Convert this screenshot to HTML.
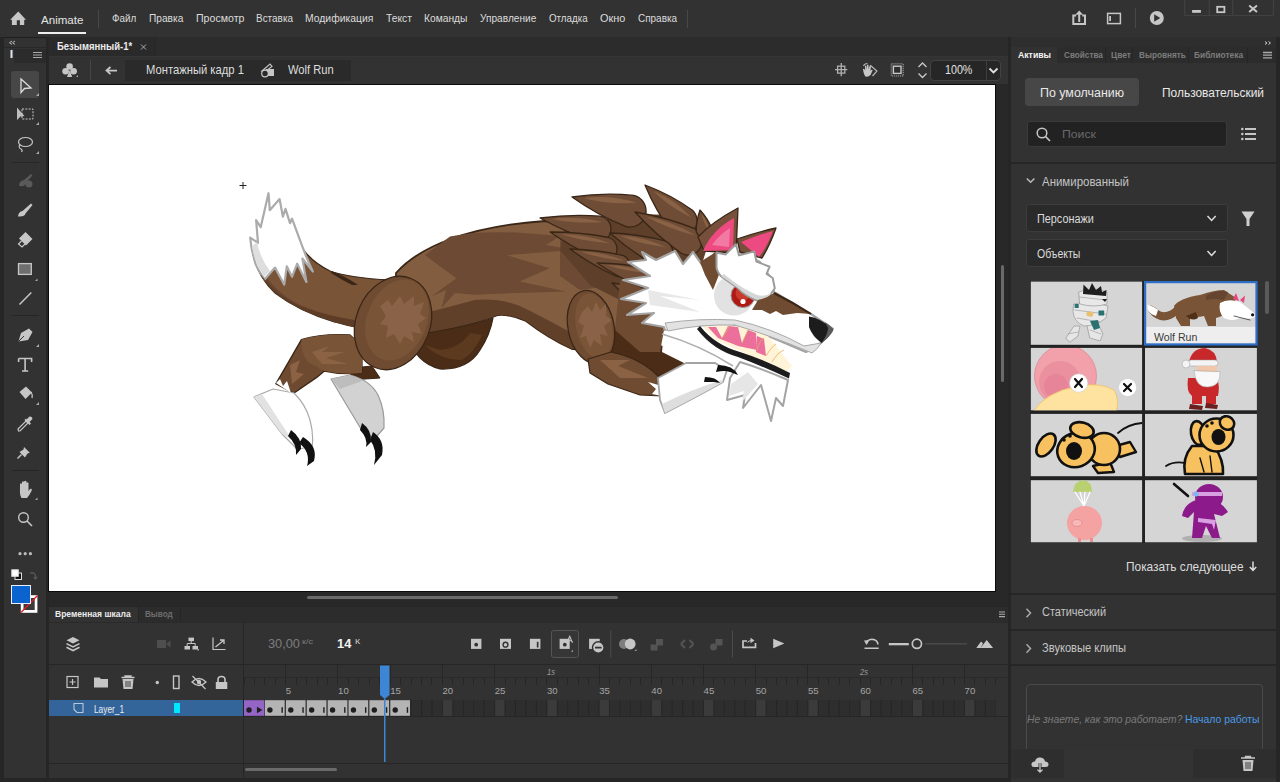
<!DOCTYPE html>
<html><head><meta charset="utf-8">
<style>
*{margin:0;padding:0;box-sizing:border-box}
html,body{width:1280px;height:782px;overflow:hidden;background:#1e1e1e;font-family:"Liberation Sans",sans-serif}
.a{position:absolute}
.t{position:absolute;white-space:nowrap;line-height:1}
svg.s{position:absolute;left:0;top:0;overflow:visible}
</style></head><body>
<div class="a" style="left:0px;top:0px;width:1280px;height:37px;background:#323232;"></div>
<div class="t" style="left:41.00px;top:15.00px;font-size:11.8px;color:#e4e4e4;transform:scaleX(0.9792);transform-origin:0 0;">Animate</div>
<div class="a" style="left:38px;top:32px;width:48px;height:2px;background:#efefef;"></div>
<div class="a" style="left:98px;top:10px;width:1px;height:18px;background:#484848;"></div>
<div class="t" style="left:112.10px;top:13.00px;font-size:11px;color:#dcdcdc;transform:scaleX(0.8946);transform-origin:0 0;">Файл</div>
<div class="t" style="left:148.80px;top:13.00px;font-size:11px;color:#dcdcdc;transform:scaleX(0.9247);transform-origin:0 0;">Правка</div>
<div class="t" style="left:195.60px;top:13.00px;font-size:11px;color:#dcdcdc;transform:scaleX(0.9632);transform-origin:0 0;">Просмотр</div>
<div class="t" style="left:256.00px;top:13.00px;font-size:11px;color:#dcdcdc;transform:scaleX(0.9046);transform-origin:0 0;">Вставка</div>
<div class="t" style="left:305.00px;top:13.00px;font-size:11px;color:#dcdcdc;transform:scaleX(0.9434);transform-origin:0 0;">Модификация</div>
<div class="t" style="left:385.50px;top:13.00px;font-size:11px;color:#dcdcdc;transform:scaleX(0.9386);transform-origin:0 0;">Текст</div>
<div class="t" style="left:424.40px;top:13.00px;font-size:11px;color:#dcdcdc;transform:scaleX(0.9313);transform-origin:0 0;">Команды</div>
<div class="t" style="left:479.70px;top:13.00px;font-size:11px;color:#dcdcdc;transform:scaleX(0.9207);transform-origin:0 0;">Управление</div>
<div class="t" style="left:549.40px;top:13.00px;font-size:11px;color:#dcdcdc;transform:scaleX(0.8874);transform-origin:0 0;">Отладка</div>
<div class="t" style="left:600.30px;top:13.00px;font-size:11px;color:#dcdcdc;transform:scaleX(0.9902);transform-origin:0 0;">Окно</div>
<div class="t" style="left:637.80px;top:13.00px;font-size:11px;color:#dcdcdc;transform:scaleX(0.9051);transform-origin:0 0;">Справка</div>
<div class="a" style="left:687px;top:10px;width:1px;height:18px;background:#484848;"></div>
<div class="a" style="left:1135px;top:8px;width:1px;height:20px;background:#484848;"></div>
<div class="a" style="left:0px;top:37px;width:4px;height:745px;background:#262626;"></div>
<div class="a" style="left:4px;top:38px;width:42px;height:744px;background:#323232;"></div>
<div class="a" style="left:46px;top:37px;width:3px;height:745px;background:#262626;"></div>
<div class="a" style="left:4px;top:47px;width:42px;height:1px;background:#282828;"></div>
<div class="a" style="left:13.5px;top:48.5px;width:32.5px;height:14px;background:#2b2b2b;"></div>
<div class="a" style="left:11px;top:71px;width:28px;height:27px;background:#474747;border-radius:3px"></div>
<div class="a" style="left:12px;top:162px;width:27px;height:1px;background:#262626;"></div>
<div class="a" style="left:12px;top:315px;width:27px;height:1px;background:#262626;"></div>
<div class="a" style="left:12px;top:470px;width:27px;height:1px;background:#262626;"></div>
<div class="a" style="left:49px;top:37px;width:959px;height:20px;background:#2c2c2c;"></div>
<div class="a" style="left:49px;top:37px;width:107px;height:19px;background:#2a2a2a;"></div>
<div class="a" style="left:155px;top:37px;width:1px;height:19px;background:#262626;"></div>
<div class="t" style="left:56.60px;top:41.00px;font-size:10.6px;color:#ececec;font-weight:bold;transform:scaleX(0.8974);transform-origin:0 0;">Безымянный-1*</div>
<div class="a" style="left:49px;top:56px;width:959px;height:1px;background:#353535;"></div>
<div class="a" style="left:49px;top:57px;width:959px;height:27px;background:#323232;"></div>
<div class="a" style="left:90px;top:60px;width:1px;height:20px;background:#464646;"></div>
<div class="a" style="left:125px;top:60px;width:226px;height:21px;background:#2a2a2a;"></div>
<div class="t" style="left:146.00px;top:65.00px;font-size:11.9px;color:#dedede;transform:scaleX(0.9441);transform-origin:0 0;">Монтажный кадр 1</div>
<div class="t" style="left:288.20px;top:65.00px;font-size:11.9px;color:#dedede;transform:scaleX(0.9384);transform-origin:0 0;">Wolf Run</div>
<div class="a" style="left:930px;top:60px;width:71px;height:21px;background:#262626;border:1px solid #424242;border-radius:4px"></div>
<div class="a" style="left:986px;top:61px;width:1px;height:19px;background:#3e3e3e;"></div>
<div class="t" style="left:944.60px;top:65.00px;font-size:11.9px;color:#e2e2e2;transform:scaleX(0.8998);transform-origin:0 0;">100%</div>
<div class="a" style="left:49px;top:84px;width:959px;height:522px;background:#282828;"></div>
<div class="a" style="left:48px;top:84px;width:948px;height:508px;background:#0a0a0a;"></div>
<div class="a" style="left:49px;top:85px;width:946px;height:506px;background:#ffffff;"></div>
<div class="a" style="left:307px;top:596px;width:311px;height:3px;background:#6a6a6a;border-radius:2px"></div>
<div class="a" style="left:1000.5px;top:265px;width:3px;height:117px;background:#6a6a6a;border-radius:2px"></div>
<div class="a" style="left:1008px;top:37px;width:3px;height:745px;background:#262626;"></div>
<div class="a" style="left:49px;top:606px;width:959px;height:172px;background:#323232;"></div>
<div class="a" style="left:49px;top:606px;width:959px;height:1px;background:#262626;"></div>
<div class="a" style="left:49px;top:607px;width:959px;height:15px;background:#2c2c2c;"></div>
<div class="a" style="left:49px;top:607px;width:89px;height:15px;background:#323232;"></div>
<div class="a" style="left:138px;top:607px;width:1px;height:15px;background:#262626;"></div>
<div class="a" style="left:180px;top:607px;width:1px;height:15px;background:#262626;"></div>
<div class="t" style="left:54.90px;top:610.00px;font-size:8.7px;color:#ececec;font-weight:bold;transform:scaleX(0.9806);transform-origin:0 0;">Временная шкала</div>
<div class="t" style="left:144.60px;top:610.00px;font-size:8.7px;color:#6e6e6e;font-weight:bold;transform:scaleX(0.9342);transform-origin:0 0;">Вывод</div>
<div class="a" style="left:49px;top:622px;width:959px;height:1px;background:#2a2a2a;"></div>
<div class="a" style="left:243px;top:622px;width:1px;height:156px;background:#262626;"></div>
<div class="a" style="left:49px;top:664px;width:959px;height:1px;background:#262626;"></div>
<div class="t" style="left:267.80px;top:638.00px;font-size:12.6px;color:#7d7d7d;transform:scaleX(1.0143);transform-origin:0 0;">30,00</div>
<div class="t" style="left:301.70px;top:638.00px;font-size:7.5px;color:#7d7d7d;transform:scaleX(1.2088);transform-origin:0 0;">к/с</div>
<div class="t" style="left:336.90px;top:638.00px;font-size:12.6px;color:#f2f2f2;font-weight:bold;transform:scaleX(1.0214);transform-origin:0 0;">14</div>
<div class="t" style="left:354.80px;top:638.00px;font-size:7.5px;color:#cfcfcf;transform:scaleX(1.1954);transform-origin:0 0;">К</div>
<div class="a" style="left:244px;top:677px;width:764px;height:1px;background:#2a2a2a;"></div>
<svg class="s" width="1280" height="782"><rect x="244" y="678" width="1" height="7" fill="#262626"/><rect x="254" y="678" width="1" height="7" fill="#262626"/><rect x="264" y="678" width="1" height="7" fill="#262626"/><rect x="275" y="678" width="1" height="7" fill="#262626"/><rect x="285" y="678" width="1" height="7" fill="#262626"/><rect x="285" y="665" width="1" height="12" fill="#262626"/><rect x="296" y="678" width="1" height="7" fill="#262626"/><rect x="306" y="678" width="1" height="7" fill="#262626"/><rect x="317" y="678" width="1" height="7" fill="#262626"/><rect x="327" y="678" width="1" height="7" fill="#262626"/><rect x="337" y="678" width="1" height="7" fill="#262626"/><rect x="337" y="665" width="1" height="12" fill="#262626"/><rect x="348" y="678" width="1" height="7" fill="#262626"/><rect x="358" y="678" width="1" height="7" fill="#262626"/><rect x="369" y="678" width="1" height="7" fill="#262626"/><rect x="379" y="678" width="1" height="7" fill="#262626"/><rect x="390" y="678" width="1" height="7" fill="#262626"/><rect x="390" y="665" width="1" height="12" fill="#262626"/><rect x="400" y="678" width="1" height="7" fill="#262626"/><rect x="411" y="678" width="1" height="7" fill="#262626"/><rect x="421" y="678" width="1" height="7" fill="#262626"/><rect x="431" y="678" width="1" height="7" fill="#262626"/><rect x="442" y="678" width="1" height="7" fill="#262626"/><rect x="442" y="665" width="1" height="12" fill="#262626"/><rect x="452" y="678" width="1" height="7" fill="#262626"/><rect x="463" y="678" width="1" height="7" fill="#262626"/><rect x="473" y="678" width="1" height="7" fill="#262626"/><rect x="484" y="678" width="1" height="7" fill="#262626"/><rect x="494" y="678" width="1" height="7" fill="#262626"/><rect x="494" y="665" width="1" height="12" fill="#262626"/><rect x="505" y="678" width="1" height="7" fill="#262626"/><rect x="515" y="678" width="1" height="7" fill="#262626"/><rect x="525" y="678" width="1" height="7" fill="#262626"/><rect x="536" y="678" width="1" height="7" fill="#262626"/><rect x="546" y="678" width="1" height="7" fill="#262626"/><rect x="557" y="678" width="1" height="7" fill="#262626"/><rect x="567" y="678" width="1" height="7" fill="#262626"/><rect x="578" y="678" width="1" height="7" fill="#262626"/><rect x="588" y="678" width="1" height="7" fill="#262626"/><rect x="599" y="678" width="1" height="7" fill="#262626"/><rect x="599" y="665" width="1" height="12" fill="#262626"/><rect x="609" y="678" width="1" height="7" fill="#262626"/><rect x="619" y="678" width="1" height="7" fill="#262626"/><rect x="630" y="678" width="1" height="7" fill="#262626"/><rect x="640" y="678" width="1" height="7" fill="#262626"/><rect x="651" y="678" width="1" height="7" fill="#262626"/><rect x="651" y="665" width="1" height="12" fill="#262626"/><rect x="661" y="678" width="1" height="7" fill="#262626"/><rect x="672" y="678" width="1" height="7" fill="#262626"/><rect x="682" y="678" width="1" height="7" fill="#262626"/><rect x="693" y="678" width="1" height="7" fill="#262626"/><rect x="703" y="678" width="1" height="7" fill="#262626"/><rect x="703" y="665" width="1" height="12" fill="#262626"/><rect x="713" y="678" width="1" height="7" fill="#262626"/><rect x="724" y="678" width="1" height="7" fill="#262626"/><rect x="734" y="678" width="1" height="7" fill="#262626"/><rect x="745" y="678" width="1" height="7" fill="#262626"/><rect x="755" y="678" width="1" height="7" fill="#262626"/><rect x="755" y="665" width="1" height="12" fill="#262626"/><rect x="766" y="678" width="1" height="7" fill="#262626"/><rect x="776" y="678" width="1" height="7" fill="#262626"/><rect x="786" y="678" width="1" height="7" fill="#262626"/><rect x="797" y="678" width="1" height="7" fill="#262626"/><rect x="807" y="678" width="1" height="7" fill="#262626"/><rect x="807" y="665" width="1" height="12" fill="#262626"/><rect x="818" y="678" width="1" height="7" fill="#262626"/><rect x="828" y="678" width="1" height="7" fill="#262626"/><rect x="839" y="678" width="1" height="7" fill="#262626"/><rect x="849" y="678" width="1" height="7" fill="#262626"/><rect x="860" y="678" width="1" height="7" fill="#262626"/><rect x="870" y="678" width="1" height="7" fill="#262626"/><rect x="880" y="678" width="1" height="7" fill="#262626"/><rect x="891" y="678" width="1" height="7" fill="#262626"/><rect x="901" y="678" width="1" height="7" fill="#262626"/><rect x="912" y="678" width="1" height="7" fill="#262626"/><rect x="912" y="665" width="1" height="12" fill="#262626"/><rect x="922" y="678" width="1" height="7" fill="#262626"/><rect x="933" y="678" width="1" height="7" fill="#262626"/><rect x="943" y="678" width="1" height="7" fill="#262626"/><rect x="954" y="678" width="1" height="7" fill="#262626"/><rect x="964" y="678" width="1" height="7" fill="#262626"/><rect x="964" y="665" width="1" height="12" fill="#262626"/><rect x="974" y="678" width="1" height="7" fill="#262626"/><rect x="985" y="678" width="1" height="7" fill="#262626"/><rect x="995" y="678" width="1" height="7" fill="#262626"/></svg>
<div class="t" style="left:285.87px;top:686.00px;font-size:9.6px;color:#a6a6a6;">5</div>
<div class="t" style="left:338.08px;top:686.00px;font-size:9.6px;color:#a6a6a6;">10</div>
<div class="t" style="left:390.29px;top:686.00px;font-size:9.6px;color:#a6a6a6;">15</div>
<div class="t" style="left:442.50px;top:686.00px;font-size:9.6px;color:#a6a6a6;">20</div>
<div class="t" style="left:494.71px;top:686.00px;font-size:9.6px;color:#a6a6a6;">25</div>
<div class="t" style="left:546.92px;top:686.00px;font-size:9.6px;color:#a6a6a6;">30</div>
<div class="t" style="left:599.13px;top:686.00px;font-size:9.6px;color:#a6a6a6;">35</div>
<div class="t" style="left:651.34px;top:686.00px;font-size:9.6px;color:#a6a6a6;">40</div>
<div class="t" style="left:703.55px;top:686.00px;font-size:9.6px;color:#a6a6a6;">45</div>
<div class="t" style="left:755.76px;top:686.00px;font-size:9.6px;color:#a6a6a6;">50</div>
<div class="t" style="left:807.97px;top:686.00px;font-size:9.6px;color:#a6a6a6;">55</div>
<div class="t" style="left:860.18px;top:686.00px;font-size:9.6px;color:#a6a6a6;">60</div>
<div class="t" style="left:912.39px;top:686.00px;font-size:9.6px;color:#a6a6a6;">65</div>
<div class="t" style="left:964.60px;top:686.00px;font-size:9.6px;color:#a6a6a6;">70</div>
<div class="t" style="left:547.40px;top:668.00px;font-size:9px;color:#9a9a9a;font-style:italic;transform:scaleX(0.8421);transform-origin:0 0;">1s</div>
<div class="t" style="left:859.68px;top:668.00px;font-size:9px;color:#9a9a9a;font-style:italic;transform:scaleX(0.8333);transform-origin:0 0;">2s</div>
<div class="a" style="left:49px;top:700px;width:194px;height:16px;background:#33649a;"></div>
<div class="a" style="left:174.4px;top:703px;width:5.6px;height:10.2px;background:#00e8ff;"></div>
<div class="t" style="left:94.30px;top:705.00px;font-size:10px;color:#ececec;transform:scaleX(0.8299);transform-origin:0 0;">Layer_1</div>
<svg class="s" width="1280" height="782"><rect x="243.5" y="700" width="752" height="16" fill="#262626"/><rect x="244.50" y="700" width="9.44" height="16" fill="#2e2e2e"/><rect x="254.94" y="700" width="9.44" height="16" fill="#2e2e2e"/><rect x="265.38" y="700" width="9.44" height="16" fill="#2e2e2e"/><rect x="275.83" y="700" width="9.44" height="16" fill="#2e2e2e"/><rect x="286.27" y="700" width="9.44" height="16" fill="#3b3b3b"/><rect x="296.71" y="700" width="9.44" height="16" fill="#2e2e2e"/><rect x="307.15" y="700" width="9.44" height="16" fill="#2e2e2e"/><rect x="317.59" y="700" width="9.44" height="16" fill="#2e2e2e"/><rect x="328.04" y="700" width="9.44" height="16" fill="#2e2e2e"/><rect x="338.48" y="700" width="9.44" height="16" fill="#3b3b3b"/><rect x="348.92" y="700" width="9.44" height="16" fill="#2e2e2e"/><rect x="359.36" y="700" width="9.44" height="16" fill="#2e2e2e"/><rect x="369.80" y="700" width="9.44" height="16" fill="#2e2e2e"/><rect x="380.25" y="700" width="9.44" height="16" fill="#2e2e2e"/><rect x="390.69" y="700" width="9.44" height="16" fill="#3b3b3b"/><rect x="401.13" y="700" width="9.44" height="16" fill="#2e2e2e"/><rect x="411.57" y="700" width="9.44" height="16" fill="#2e2e2e"/><rect x="422.01" y="700" width="9.44" height="16" fill="#2e2e2e"/><rect x="432.46" y="700" width="9.44" height="16" fill="#2e2e2e"/><rect x="442.90" y="700" width="9.44" height="16" fill="#3b3b3b"/><rect x="453.34" y="700" width="9.44" height="16" fill="#2e2e2e"/><rect x="463.78" y="700" width="9.44" height="16" fill="#2e2e2e"/><rect x="474.22" y="700" width="9.44" height="16" fill="#2e2e2e"/><rect x="484.67" y="700" width="9.44" height="16" fill="#2e2e2e"/><rect x="495.11" y="700" width="9.44" height="16" fill="#3b3b3b"/><rect x="505.55" y="700" width="9.44" height="16" fill="#2e2e2e"/><rect x="515.99" y="700" width="9.44" height="16" fill="#2e2e2e"/><rect x="526.43" y="700" width="9.44" height="16" fill="#2e2e2e"/><rect x="536.88" y="700" width="9.44" height="16" fill="#2e2e2e"/><rect x="547.32" y="700" width="9.44" height="16" fill="#3b3b3b"/><rect x="557.76" y="700" width="9.44" height="16" fill="#2e2e2e"/><rect x="568.20" y="700" width="9.44" height="16" fill="#2e2e2e"/><rect x="578.64" y="700" width="9.44" height="16" fill="#2e2e2e"/><rect x="589.09" y="700" width="9.44" height="16" fill="#2e2e2e"/><rect x="599.53" y="700" width="9.44" height="16" fill="#3b3b3b"/><rect x="609.97" y="700" width="9.44" height="16" fill="#2e2e2e"/><rect x="620.41" y="700" width="9.44" height="16" fill="#2e2e2e"/><rect x="630.85" y="700" width="9.44" height="16" fill="#2e2e2e"/><rect x="641.30" y="700" width="9.44" height="16" fill="#2e2e2e"/><rect x="651.74" y="700" width="9.44" height="16" fill="#3b3b3b"/><rect x="662.18" y="700" width="9.44" height="16" fill="#2e2e2e"/><rect x="672.62" y="700" width="9.44" height="16" fill="#2e2e2e"/><rect x="683.06" y="700" width="9.44" height="16" fill="#2e2e2e"/><rect x="693.51" y="700" width="9.44" height="16" fill="#2e2e2e"/><rect x="703.95" y="700" width="9.44" height="16" fill="#3b3b3b"/><rect x="714.39" y="700" width="9.44" height="16" fill="#2e2e2e"/><rect x="724.83" y="700" width="9.44" height="16" fill="#2e2e2e"/><rect x="735.27" y="700" width="9.44" height="16" fill="#2e2e2e"/><rect x="745.72" y="700" width="9.44" height="16" fill="#2e2e2e"/><rect x="756.16" y="700" width="9.44" height="16" fill="#3b3b3b"/><rect x="766.60" y="700" width="9.44" height="16" fill="#2e2e2e"/><rect x="777.04" y="700" width="9.44" height="16" fill="#2e2e2e"/><rect x="787.48" y="700" width="9.44" height="16" fill="#2e2e2e"/><rect x="797.93" y="700" width="9.44" height="16" fill="#2e2e2e"/><rect x="808.37" y="700" width="9.44" height="16" fill="#3b3b3b"/><rect x="818.81" y="700" width="9.44" height="16" fill="#2e2e2e"/><rect x="829.25" y="700" width="9.44" height="16" fill="#2e2e2e"/><rect x="839.69" y="700" width="9.44" height="16" fill="#2e2e2e"/><rect x="850.14" y="700" width="9.44" height="16" fill="#2e2e2e"/><rect x="860.58" y="700" width="9.44" height="16" fill="#3b3b3b"/><rect x="871.02" y="700" width="9.44" height="16" fill="#2e2e2e"/><rect x="881.46" y="700" width="9.44" height="16" fill="#2e2e2e"/><rect x="891.90" y="700" width="9.44" height="16" fill="#2e2e2e"/><rect x="902.35" y="700" width="9.44" height="16" fill="#2e2e2e"/><rect x="912.79" y="700" width="9.44" height="16" fill="#3b3b3b"/><rect x="923.23" y="700" width="9.44" height="16" fill="#2e2e2e"/><rect x="933.67" y="700" width="9.44" height="16" fill="#2e2e2e"/><rect x="944.11" y="700" width="9.44" height="16" fill="#2e2e2e"/><rect x="954.56" y="700" width="9.44" height="16" fill="#2e2e2e"/><rect x="965.00" y="700" width="9.44" height="16" fill="#3b3b3b"/><rect x="975.44" y="700" width="9.44" height="16" fill="#2e2e2e"/><rect x="985.88" y="700" width="9.44" height="16" fill="#2e2e2e"/></svg>
<div class="a" style="left:244px;top:716px;width:764px;height:1px;background:#262626;"></div>
<div class="a" style="left:49px;top:763px;width:959px;height:1px;background:#262626;"></div>
<div class="a" style="left:245px;top:768px;width:92px;height:3px;background:#6a6a6a;border-radius:2px"></div>
<div class="a" style="left:0px;top:778px;width:1280px;height:4px;background:#262626;"></div>
<div class="a" style="left:1011px;top:37px;width:265px;height:745px;background:#323232;"></div>
<div class="a" style="left:1276px;top:37px;width:4px;height:745px;background:#262626;"></div>
<div class="a" style="left:1011px;top:37px;width:265px;height:10px;background:#2e2e2e;"></div>
<div class="a" style="left:1057px;top:47px;width:219px;height:16px;background:#2c2c2c;"></div>
<div class="t" style="left:1018.00px;top:51.00px;font-size:8.7px;color:#f2f2f2;font-weight:bold;">Активы</div>
<div class="t" style="left:1063.80px;top:51.00px;font-size:8.7px;color:#7c7c7c;font-weight:bold;transform:scaleX(0.9420);transform-origin:0 0;">Свойства</div>
<div class="t" style="left:1110.80px;top:51.00px;font-size:8.7px;color:#7c7c7c;font-weight:bold;transform:scaleX(0.9684);transform-origin:0 0;">Цвет</div>
<div class="t" style="left:1138.70px;top:51.00px;font-size:8.7px;color:#7c7c7c;font-weight:bold;transform:scaleX(0.9426);transform-origin:0 0;">Выровнять</div>
<div class="t" style="left:1193.50px;top:51.00px;font-size:8.7px;color:#7c7c7c;font-weight:bold;transform:scaleX(0.9628);transform-origin:0 0;">Библиотека</div>
<div class="a" style="left:1105px;top:47px;width:1px;height:16px;background:#262626;"></div>
<div class="a" style="left:1132px;top:47px;width:1px;height:16px;background:#262626;"></div>
<div class="a" style="left:1188px;top:47px;width:1px;height:16px;background:#262626;"></div>
<div class="a" style="left:1247px;top:47px;width:1px;height:16px;background:#262626;"></div>
<div class="a" style="left:1025px;top:78px;width:114px;height:28px;background:#474747;border-radius:4px"></div>
<div class="t" style="left:1040.40px;top:87.00px;font-size:12px;color:#e8e8e8;transform:scaleX(1.0351);transform-origin:0 0;">По умолчанию</div>
<div class="t" style="left:1161.70px;top:87.00px;font-size:12px;color:#e8e8e8;transform:scaleX(0.9946);transform-origin:0 0;">Пользовательский</div>
<div class="a" style="left:1027px;top:121px;width:200px;height:26px;background:#222222;border:1px solid #3a3a3a;border-radius:3px"></div>
<div class="t" style="left:1062.00px;top:128.00px;font-size:11.7px;color:#6a6a6a;transform:scaleX(1.0462);transform-origin:0 0;">Поиск</div>
<div class="a" style="left:1011px;top:162px;width:265px;height:2px;background:#262626;"></div>
<div class="t" style="left:1041.50px;top:176.00px;font-size:12.3px;color:#c4c4c4;transform:scaleX(0.9315);transform-origin:0 0;">Анимированный</div>
<div class="a" style="left:1026px;top:204px;width:202px;height:28px;background:#2a2a2a;border:1px solid #3c3c3c;border-radius:3px"></div>
<div class="a" style="left:1026px;top:239px;width:202px;height:28px;background:#2a2a2a;border:1px solid #3c3c3c;border-radius:3px"></div>
<div class="t" style="left:1036.80px;top:213.00px;font-size:12px;color:#dcdcdc;transform:scaleX(0.9029);transform-origin:0 0;">Персонажи</div>
<div class="t" style="left:1036.80px;top:248.00px;font-size:12px;color:#dcdcdc;transform:scaleX(0.8747);transform-origin:0 0;">Объекты</div>
<div class="a" style="left:1030px;top:281px;width:227px;height:262px;background:#222;"></div>
<div class="a" style="left:1264.8px;top:281px;width:4px;height:33px;background:#5a5a5a;border-radius:2px"></div>
<div class="t" style="left:1126.20px;top:561.00px;font-size:12.2px;color:#dcdcdc;transform:scaleX(0.9739);transform-origin:0 0;">Показать следующее</div>
<div class="a" style="left:1011px;top:593px;width:265px;height:2px;background:#262626;"></div>
<div class="t" style="left:1041.50px;top:606.00px;font-size:12px;color:#c4c4c4;transform:scaleX(0.9117);transform-origin:0 0;">Статический</div>
<div class="a" style="left:1011px;top:629px;width:265px;height:2px;background:#262626;"></div>
<div class="t" style="left:1041.50px;top:642.00px;font-size:12px;color:#c4c4c4;transform:scaleX(0.9266);transform-origin:0 0;">Звуковые клипы</div>
<div class="a" style="left:1011px;top:664px;width:265px;height:2px;background:#262626;"></div>
<div class="a" style="left:1025.7px;top:683.5px;width:237px;height:80px;background:transparent;border:1px solid #4a4a4a;border-radius:4px"></div>
<div class="t" style="left:1026.80px;top:713.00px;font-size:11.6px;color:#7a7a7a;font-style:italic;transform:scaleX(0.8886);transform-origin:0 0;">Не знаете, как это работает?</div>
<div class="t" style="left:1185.40px;top:713.00px;font-size:11.6px;color:#4a9ae6;transform:scaleX(0.8983);transform-origin:0 0;">Начало работы</div>
<div class="a" style="left:1011px;top:749px;width:265px;height:29px;background:#2e2e2e;"></div>
<div class="a" style="left:1063.5px;top:749px;width:129px;height:29px;background:#333333;"></div>
<svg class="s" width="1280" height="782"><defs><clipPath id="c00"><rect x="1030.8" y="281.6" width="111.29999999999995" height="63.19999999999999"/></clipPath><clipPath id="c01"><rect x="1145.0" y="281.6" width="111.90000000000009" height="63.19999999999999"/></clipPath><clipPath id="c10"><rect x="1030.8" y="347.9" width="111.29999999999995" height="62.400000000000034"/></clipPath><clipPath id="c11"><rect x="1145.0" y="347.9" width="111.90000000000009" height="62.400000000000034"/></clipPath><clipPath id="c20"><rect x="1030.8" y="413.9" width="111.29999999999995" height="62.30000000000001"/></clipPath><clipPath id="c21"><rect x="1145.0" y="413.9" width="111.90000000000009" height="62.30000000000001"/></clipPath><clipPath id="c30"><rect x="1030.8" y="480.2" width="111.29999999999995" height="62.099999999999966"/></clipPath><clipPath id="c31"><rect x="1145.0" y="480.2" width="111.90000000000009" height="62.099999999999966"/></clipPath></defs><rect x="1030.8" y="281.6" width="111.29999999999995" height="63.19999999999999" fill="#d5d5d5"/><rect x="1145.0" y="281.6" width="111.90000000000009" height="63.19999999999999" fill="#d5d5d5"/><rect x="1030.8" y="347.9" width="111.29999999999995" height="62.400000000000034" fill="#d5d5d5"/><rect x="1145.0" y="347.9" width="111.90000000000009" height="62.400000000000034" fill="#d5d5d5"/><rect x="1030.8" y="413.9" width="111.29999999999995" height="62.30000000000001" fill="#d5d5d5"/><rect x="1145.0" y="413.9" width="111.90000000000009" height="62.30000000000001" fill="#d5d5d5"/><rect x="1030.8" y="480.2" width="111.29999999999995" height="62.099999999999966" fill="#d5d5d5"/><rect x="1145.0" y="480.2" width="111.90000000000009" height="62.099999999999966" fill="#d5d5d5"/><g clip-path="url(#c00)"><path d="M1066,338 L1074,326 L1080,326 L1078,336 L1070,342 Z" fill="#e6e6e6" stroke="#a0a0a0" stroke-width="0.8" stroke-linejoin="round" stroke-linecap="round"/><path d="M1087,324 L1097,322 L1103,334 L1100,341 L1090,338 Z" fill="#e6e6e6" stroke="#a0a0a0" stroke-width="0.8" stroke-linejoin="round" stroke-linecap="round"/><path d="M1074,304 Q1090,300 1108,306 L1106,318 Q1096,326 1084,326 Q1074,322 1073,312 Z" fill="#e8e8e8" stroke="#a0a0a0" stroke-width="0.8" stroke-linejoin="round" stroke-linecap="round"/><path d="M1079,292 Q1092,286 1107,292 L1107,304 Q1094,308 1080,304 Z" fill="#e8e8e8" stroke="#a0a0a0" stroke-width="0.8" stroke-linejoin="round" stroke-linecap="round"/><path d="M1079,297 L1106,300 M1075,310 L1106,314 M1077,318 L1100,322 M1068,334 L1078,332 M1090,330 L1101,334" fill="none" stroke="#b0b0b0" stroke-width="0.9" stroke-linejoin="round" stroke-linecap="round"/><path d="M1083,294 L1083.5,284.5 L1089,290 L1092,283 L1096,290 L1101,286 L1102,292 L1106.5,290 L1106,296 Z" fill="#1e1e1e"/><path d="M1102,299 L1107,299 L1105,302 Z" fill="#1e1e1e"/><rect x="1074.7" y="304" width="4" height="4" fill="#2a7272"/><rect x="1098.5" y="310.5" width="5.7" height="5" fill="#2a7272"/><path d="M1090,321 L1098,320 L1100,328 L1094,330 Z" fill="#2a7272"/><path d="M1086,313 Q1090,310 1094,313 L1092,317 L1087,316 Z" fill="#e8c070"/></g><g clip-path="url(#c01)"><rect x="1145" y="326.9" width="112" height="16" fill="#eeeeee"/><path d="M1148,306 Q1152,304 1158,310 Q1166,316 1176,306 L1178,314 Q1170,322 1160,320 Q1151,317 1148,310 Z" fill="#7a5437"/><path d="M1147.6,304.5 Q1153,306 1158,310 L1156,316 Q1149,314 1147.6,309 Z" fill="#ffffff"/><path d="M1174,306 Q1180,298 1200,295 Q1215,290 1224,290 L1236,298 L1232,312 Q1222,316 1216,318 L1216,326 L1208,326 L1204,316 Q1196,318 1190,316 L1190,326 L1181,326 L1176,318 Z" fill="#7a5437"/><path d="M1186,316 Q1192,322 1198,318 L1196,312 Z" fill="#4e3018"/><path d="M1206,296 Q1216,289 1228,292 L1224,300 Q1214,298 1206,300 Z" fill="#654530"/><path d="M1220,303 Q1228,298 1240,302 Q1248,308 1254,313 L1255,317 Q1250,320 1240,318 Q1232,322 1224,318 Q1218,312 1220,303 Z" fill="#ffffff"/><path d="M1233,299 L1236,293 L1239,301 Z" fill="#e8457e"/><path d="M1240,300 L1245,295.5 L1244,303 Z" fill="#e8457e"/><circle cx="1252.6" cy="314.8" r="1.6" fill="#111"/><path d="M1234,316 L1250,320" fill="none" stroke="#333" stroke-width="0.8" stroke-linejoin="round" stroke-linecap="round"/></g><rect x="1145.1" y="282.1" width="111.4" height="62.4" fill="none" stroke="#2d6fc6" stroke-width="2.2"/><g clip-path="url(#c10)"><circle cx="1065.5" cy="376" r="31" fill="#f2a0aa" stroke="#e08898" stroke-width="0.8"/><circle cx="1060" cy="382" r="21" fill="#eb909e"/><circle cx="1056" cy="386" r="12" fill="#e8849a"/><path d="M1033,412 Q1045,392 1078,386 Q1100,382 1114,390 Q1120,400 1116,412 Z" fill="#fde2a0" stroke="#f0c060" stroke-width="0.8" stroke-linejoin="round" stroke-linecap="round"/><circle cx="1078.7" cy="383" r="9.2" fill="#fff" stroke="#ccc" stroke-width="0.6"/><circle cx="1127.6" cy="387.5" r="9" fill="#fff" stroke="#ccc" stroke-width="0.6"/><path d="M1075,379 L1082,387 M1082,379 L1075,387" fill="none" stroke="#111" stroke-width="2.2" stroke-linejoin="round" stroke-linecap="round"/><path d="M1124,384 L1131,391 M1131,384 L1124,391" fill="none" stroke="#111" stroke-width="2.2" stroke-linejoin="round" stroke-linecap="round"/></g><g clip-path="url(#c11)"><path d="M1189,362 Q1192,348 1205,348 Q1216,350 1217,362 Z" fill="#c8282a"/><rect x="1188" y="360" width="30" height="6" rx="3" fill="#f4f4f4" stroke="#999" stroke-width="0.5"/><circle cx="1186" cy="364" r="4" fill="#f4f4f4" stroke="#999" stroke-width="0.5"/><rect x="1197" y="366" width="20" height="9" fill="#f2c6a8"/><path d="M1188,378 Q1186,392 1192,396 L1218,396 Q1220,386 1217,378 Z" fill="#c8282a"/><path d="M1194,371 Q1196,388 1208,387 Q1221,386 1220,372 Z" fill="#f8f8f8" stroke="#aaa" stroke-width="0.6" stroke-linejoin="round" stroke-linecap="round"/><rect x="1192" y="396" width="10" height="8" fill="#c8282a"/><rect x="1206" y="396" width="10" height="8" fill="#c8282a"/><path d="M1190,404 L1203,406 L1202,410 L1189,409 Z" fill="#6a2020"/><path d="M1206,403 L1218,405 L1217,409 L1205,408 Z" fill="#6a2020"/></g><g clip-path="url(#c20)"><path d="M1118,433 Q1128,424 1142,423" fill="none" stroke="#111" stroke-width="1.8" stroke-linejoin="round" stroke-linecap="round"/><path d="M1093,466 L1110,462 L1114,472 L1098,473 Z" fill="#f8c160" stroke="#111" stroke-width="2.4" stroke-linejoin="round" stroke-linecap="round"/><path d="M1112,447 L1130,442 L1136,452 L1120,457 Z" fill="#f8c160" stroke="#111" stroke-width="2.4" stroke-linejoin="round" stroke-linecap="round"/><ellipse cx="1104" cy="449" rx="16" ry="16" fill="#f8c160" stroke="#111" stroke-width="2.6"/><ellipse cx="1046" cy="445" rx="13" ry="7.5" transform="rotate(-55 1046 445)" fill="#f8c160" stroke="#111" stroke-width="2.6"/><ellipse cx="1076" cy="450" rx="19" ry="17" transform="rotate(-20 1076 450)" fill="#f8c160" stroke="#111" stroke-width="2.6"/><ellipse cx="1082" cy="430" rx="12" ry="7.5" transform="rotate(15 1082 430)" fill="#f8c160" stroke="#111" stroke-width="2.6"/><ellipse cx="1074" cy="451" rx="8" ry="9" fill="#111"/><circle cx="1064" cy="440" r="1.8" fill="#111"/><circle cx="1070" cy="436" r="1.8" fill="#111"/></g><g clip-path="url(#c21)"><path d="M1166,466 Q1174,461 1185,463" fill="none" stroke="#111" stroke-width="1.8" stroke-linejoin="round" stroke-linecap="round"/><path d="M1185,474 Q1182,458 1192,446 L1214,446 Q1224,460 1223,474 Z" fill="#f8c160" stroke="#111" stroke-width="2.6" stroke-linejoin="round" stroke-linecap="round"/><path d="M1200,458 L1204,472 M1210,456 L1212,472" fill="none" stroke="#111" stroke-width="1.4" stroke-linejoin="round" stroke-linecap="round"/><ellipse cx="1198" cy="433" rx="7" ry="12" transform="rotate(-10 1198 433)" fill="#f8c160" stroke="#111" stroke-width="2.6"/><ellipse cx="1216.5" cy="435" rx="17" ry="16.5" fill="#f8c160" stroke="#111" stroke-width="2.6"/><ellipse cx="1227" cy="423" rx="7.5" ry="6.5" transform="rotate(30 1227 423)" fill="#f8c160" stroke="#111" stroke-width="2.6"/><ellipse cx="1218.5" cy="437" rx="7" ry="8" fill="#111"/><circle cx="1207" cy="426" r="1.8" fill="#111"/><circle cx="1212" cy="423" r="1.8" fill="#111"/></g><g clip-path="url(#c30)"><path d="M1073,492 Q1074,481 1083,480 Q1092,481 1092,492 Z" fill="#b8d070"/><path d="M1075,492 L1084,506 L1090,492 M1080,492 L1084,506 L1085,492" fill="none" stroke="#ffffff" stroke-width="1.2" stroke-linejoin="round" stroke-linecap="round"/><ellipse cx="1084.5" cy="523" rx="17.5" ry="17" fill="#f4a2a2"/><ellipse cx="1077" cy="523" rx="5" ry="3.5" fill="#f8b8b8" stroke="#d88080" stroke-width="0.6"/><rect x="1078" y="538" width="3" height="4" fill="#e89090"/><rect x="1090" y="538" width="3" height="4" fill="#e89090"/></g><g clip-path="url(#c31)"><ellipse cx="1202" cy="538.5" rx="20" ry="3.5" fill="#b0b0b0"/><path d="M1174,484 L1188,496" fill="none" stroke="#111" stroke-width="2.6" stroke-linejoin="round" stroke-linecap="round"/><path d="M1196,500 Q1184,504 1182,516 L1188,518 L1194,512 L1192,538 L1202,538 L1206,526 L1212,538 L1220,538 L1214,514 L1222,516 L1228,512 Q1222,502 1212,500 Z" fill="#8c1a8a"/><ellipse cx="1209" cy="497" rx="14" ry="13" fill="#8c1a8a"/><rect x="1192" y="492" width="30" height="4" fill="#d8a0e0"/><path d="M1198,518 L1216,520 L1214,530 L1212,524 L1198,522 Z" fill="#d8a0e0"/><circle cx="1196" cy="494" r="2.5" fill="#7ab8f0"/></g></svg>
<div class="t" style="left:1154.00px;top:331.00px;font-size:11.6px;color:#3a3a3a;transform:scaleX(0.9137);transform-origin:0 0;">Wolf Run</div>
<svg class="s" width="1280" height="782"><path d="M352,368 L372,366 L380,378 L350,380 Z" fill="#4b2c16" stroke="#3a2616" stroke-width="1" stroke-linejoin="round" /><path d="M331,379 L350,375 Q370,380 378,395 Q385,410 384,428 L377,436 L368,437 L361,429 Z" fill="#d2d2d2" stroke="#9a9a9a" stroke-width="1.2" stroke-linejoin="round" /><path d="M331,379 L350,375 Q358,377 362,381 L340,389 Z" fill="#bdbdbd" /><path d="M362,423 Q372,430 371,442 L366,447 Q368,438 360,430 Z" fill="#111" /><path d="M373,432 Q385,440 382,455 L374,465 Q378,450 370,440 Z" fill="#111" /><path d="M390,280 Q350,278 330,271 Q312,262 303,249 L275,245 L252,249 Q256,275 275,293 Q300,312 335,322 Q360,330 390,330 Z" fill="#7a5437" stroke="#3a2616" stroke-width="1.3" stroke-linejoin="round" /><path d="M258,262 Q270,290 300,305 Q330,318 370,322 L392,322 L392,330 Q360,330 335,322 Q300,312 275,293 Q260,278 253,255 Z" fill="#674530" /><path d="M268.5,193.2 L269.8,210.2 L279.6,199.1 L282.9,216.7 L285.5,208.9 L290,223.2 L292,218.7 L302.4,246.7 L306,256 L312.9,271.6 L302.4,258.5 L306.4,282 L297.2,263.7 L292,276.8 L286.8,266.3 L284.2,284.6 L275,267.6 L264.6,279.4 Q258,270 255.4,263.7 L251.5,248 L250.2,237.6 L258,242.8 L256.1,220 L260.7,227.2 Z" fill="#ffffff" stroke="#ababab" stroke-width="2.2" stroke-linejoin="round" /><path d="M252,246 Q254,262 264,277 L270,271 Q260,258 257,242 Z" fill="#dedede" /><path d="M331,271 Q345,276 358,285 L352,285 Q342,280 331,273 Z" fill="#3a2616" /><path d="M262,276 Q275,295 300,306 Q330,318 370,322 L392,322 L392,330 Q360,330 335,322 Q300,312 275,293 Q265,283 260,274 Z" fill="#5e3d26" /><path d="M396,273 C420,246 470,226 545,221 L600,232 L640,250 L640,330 Q620,340 600,350 L572,349 Q548,338 526,321 Q510,314 498,315 Q470,326 422,334 Q405,334 396,320 Z" fill="#835d40" stroke="#3a2616" stroke-width="1.8" stroke-linejoin="round" /><path d="M425,255 L450,236.6 Q480,230 526,233.3 L560,236 L546,245 L575,250 L506.4,255 L549.6,268.2 L519.7,281.5 L566,291.5 L516.4,293 L474.8,294.8 L454.9,293.1 L441.6,308 L446,290 L432,296 L456.5,278.2 L438.2,264.9 Z" fill="#6c4a33" /><path d="M560,236 L600,240 L590,252 L620,262 L585,268 L615,285 L580,290 L560,276 Z" fill="#6c4a33" /><path d="M405,318 Q430,312 474.8,300 Q500,298 520,306 Q545,318 575,335 L600,342 L600,350 L572,349 Q548,338 526,321 Q510,314 498,315 Q470,326 422,334 Q405,334 400,326 Z" fill="#604029" /><path d="M408,336 Q415,362 440,369 Q468,370 480,350 Q490,335 493,318 Q470,326 422,334 Z" fill="#4b2c16" stroke="#3a2616" stroke-width="1.2" stroke-linejoin="round" /><path d="M425,345 Q440,360 462,360 Q475,352 482,335 L470,333 Q460,348 440,350 Z" fill="#5c3a1f" /><path d="M301.4,339.6 Q324,333 350,335 L362,346 L362,373 Q342,375 324.4,371 L316.7,377.4 L293.7,393.3 L275.8,383.8 Q288.6,362 301.4,339.6 Z" fill="#6e4a31" stroke="#3a2616" stroke-width="1.3" stroke-linejoin="round" /><path d="M301.4,339.6 Q324,333 350,335 L362,346 L362,373 Q342,375 324.4,371 L308,362 Q300,352 301.4,339.6 Z" fill="#7a5437" /><path d="M312,352 L330,346 L322,352 L345,352 L326,358 L348,364 L322,364 Z" fill="#8c6244" /><path d="M290,365 L300,360 L296,372 L304,374 L292,384 Z" fill="#8c6244" /><path d="M254,397 L273,389 L294,393 Q306,405 310,420 Q314,435 312,447 L297,449 L282,434 Z" fill="#ffffff" stroke="#a9a9a9" stroke-width="1.2" stroke-linejoin="round" /><path d="M254,397 L262,394 L292,440 L282,434 Z" fill="#e2e2e2" /><path d="M291,430 Q302,438 301,449 L296,455 Q297,444 288,436 Z" fill="#111" /><path d="M303,437 Q318,446 314,461 L307,466 Q311,452 299,443 Z" fill="#111" /><path d="M276,383 L280,379 L283,386 L287,381 L291,393 Z" fill="#fff" /><ellipse cx="393" cy="323" rx="37" ry="48" transform="rotate(22 393 323)" fill="#6f4b32" stroke="#3a2616" stroke-width="1.3"/><ellipse cx="397" cy="320" rx="30" ry="42" transform="rotate(22 397 320)" fill="#7a5437"/><path d="M380,306 L388,300 L392,306 L400,296 L404,304 L414,296 L414,306 L424,302 L420,314 L426,318 L418,324 L422,334 L412,332 L414,342 L404,336 L400,344 L394,334 L386,338 L388,326 L380,324 L386,316 Z" fill="#8a6247" /><path d="M612,345 L648,342 Q672,348 690,360 L668,378 L622,370 Z" fill="#4b2c16" stroke="#3a2616" stroke-width="1.2" stroke-linejoin="round" /><path d="M600,328 L645,326 L648,348 L600,356 Z" fill="#4b2c16" /><path d="M565,228 L630,214 L680,215 L712,232 L700,270 L660,300 L620,300 L590,285 L560,250 Z" fill="#5e3f2a" /><path d="M540,218 Q570.8,213.9 600.4,216.2 A13,13 0 0 1 595.6,241.8 Q567.2,233.1 540,218 Z" fill="#6f4c35" stroke="#3a2616" stroke-width="1.3" stroke-linejoin="round" /><path d="M551.8,218.9 Q576.5,215.7 603.3,222.1 Q574.9,224.0 551.8,218.9 Z" fill="#896246" /><path d="M572,197 Q603.8,192.3 633.8,195.4 A16,16 0 0 1 626.2,226.6 Q598.2,215.7 572,197 Z" fill="#6f4c35" stroke="#3a2616" stroke-width="1.3" stroke-linejoin="round" /><path d="M584.0,198.2 Q609.4,194.5 636.9,202.8 Q607.0,204.6 584.0,198.2 Z" fill="#896246" /><path d="M645,185 Q671.3,194.9 692.5,210.2 A15,15 0 0 1 671.5,231.8 Q655.7,211.1 645,185 Z" fill="#6f4c35" stroke="#3a2616" stroke-width="1.3" stroke-linejoin="round" /><path d="M653.4,191.1 Q674.5,199.1 691.5,217.7 Q667.7,206.1 653.4,191.1 Z" fill="#896246" /><path d="M550,232 Q580.2,231.9 608.5,237.5 A12,12 0 0 1 601.5,260.5 Q574.8,249.1 550,232 Z" fill="#6f4c35" stroke="#3a2616" stroke-width="1.3" stroke-linejoin="round" /><path d="M561.4,234.3 Q585.5,234.2 610.6,243.2 Q583.2,241.6 561.4,234.3 Z" fill="#896246" /><path d="M635,212 Q666.5,217.3 694.7,228.7 A14,14 0 0 1 681.3,253.3 Q656.5,235.7 635,212 Z" fill="#6f4c35" stroke="#3a2616" stroke-width="1.3" stroke-linejoin="round" /><path d="M646.3,216.6 Q671.5,220.8 695.7,235.6 Q667.1,228.8 646.3,216.6 Z" fill="#896246" /><path d="M610,233 Q638.6,233.9 664.8,240.9 A13,13 0 0 1 655.2,265.1 Q631.4,252.1 610,233 Z" fill="#6f4c35" stroke="#3a2616" stroke-width="1.3" stroke-linejoin="round" /><path d="M620.5,235.8 Q643.4,236.6 666.5,247.2 Q640.2,244.4 620.5,235.8 Z" fill="#896246" /><path d="M570,249 Q597.7,249.7 623.5,255.6 A11,11 0 0 1 616.5,276.4 Q592.3,265.3 570,249 Z" fill="#6f4c35" stroke="#3a2616" stroke-width="1.3" stroke-linejoin="round" /><path d="M580.4,251.4 Q602.5,251.9 625.2,260.8 Q600.2,258.7 580.4,251.4 Z" fill="#896246" /><path d="M597,263 Q623.2,263.3 648.0,268.5 A10,10 0 0 1 642.0,287.5 Q618.8,277.7 597,263 Z" fill="#6f4c35" stroke="#3a2616" stroke-width="1.3" stroke-linejoin="round" /><path d="M606.9,265.0 Q627.9,265.3 649.7,273.2 Q625.9,271.5 606.9,265.0 Z" fill="#896246" /><path d="M612,283 Q629.7,285.1 645.6,290.8 A8,8 0 0 1 638.4,305.2 Q624.3,295.9 612,283 Z" fill="#6f4c35" stroke="#3a2616" stroke-width="1.3" stroke-linejoin="round" /><path d="M618.4,285.3 Q632.5,287.0 646.3,294.8 Q630.2,291.6 618.4,285.3 Z" fill="#896246" /><path d="M700,210 Q707.9,218.8 711.8,228.4 A8,8 0 0 1 696.2,231.6 Q696.1,221.2 700,210 Z" fill="#6f4c35" stroke="#3a2616" stroke-width="1.3" stroke-linejoin="round" /><path d="M701.6,213.8 Q707.9,220.9 709.2,231.4 Q702.8,221.9 701.6,213.8 Z" fill="#896246" /><path d="M620,280 L660,295 L664,330 L660,352 L640,352 L615,330 Z" fill="#6f4b32" /><ellipse cx="591" cy="327" rx="23" ry="37" transform="rotate(-12 591 327)" fill="#6f4b32" stroke="#3a2616" stroke-width="1.3"/><ellipse cx="594" cy="326" rx="18" ry="33" transform="rotate(-12 594 326)" fill="#7a5437"/><path d="M582,312 L588,306 L592,312 L596,302 L600,310 L606,304 L606,316 L612,320 L604,326 L608,336 L600,334 L602,346 L594,340 L590,348 L586,336 L580,338 L584,326 L578,322 Z" fill="#8a6247" /><path d="M588,359 L611,352 Q640,358 658,376 L662,396 L640,395 L608,384 L590,373 Z" fill="#6f4b32" stroke="#3a2616" stroke-width="1.2" stroke-linejoin="round" /><path d="M600,360 L630,360 L618,366 L648,378 L620,378 Z" fill="#8c6244" /><path d="M648,382 L662,386 L662,396 L652,394 L656,389 Z" fill="#fff" /><path d="M628,262 L646,260 L642,252 L656,260 L675,251 L683,264 L693,252 L703,266 L716,252 L735,250 L760,262 L772,280 L774,292 L811,314 L833,329 L821,343 L806,352 L773,338 L737,325 L698,322 L665,331 L664,327 L642,323 L654,313 L627,315 L646,303 L621,299 L648,288 L623,280 L650,276 Z" fill="#ffffff" stroke="#a4a4a4" stroke-width="2.2" stroke-linejoin="round" /><path d="M648,290 L700,300 L660,296 L700,312 L650,305 Z" fill="#e8e8e8" /><path d="M698,237 Q712,222 738,208 L736,253 L704,251 Z" fill="#76503a" stroke="#3a2616" stroke-width="1.3" stroke-linejoin="round" /><path d="M703,251 Q712,230 734,218 L733,250 Z" fill="#ee4a82" /><path d="M712,245 Q720,234 730,228 L729,247 Z" fill="#f27aa2" /><path d="M737,239 Q758,232 776,228 Q770,245 762,258 L740,252 Z" fill="#76503a" stroke="#3a2616" stroke-width="1.3" stroke-linejoin="round" /><path d="M741,242 Q758,235 773,231 Q767,247 759,257 Z" fill="#ee4a82" /><path d="M700,262 L716,252 L720,272 L713,290 L705,275 Z" fill="#6f4b32" /><circle cx="734" cy="295.5" r="20" fill="#e2e2e2"/><circle cx="743" cy="295.5" r="12" fill="#b01a14" stroke="#9a9a9a" stroke-width="1"/><circle cx="743" cy="293" r="7.5" fill="#c83a2c"/><circle cx="743" cy="301.5" r="2.6" fill="#fff"/><path d="M716.5,252.4 L725.7,254.4 L735.9,244.2 L739,255.4 L754.3,251.4 L756.4,261.6 L769.6,266.7 L766.6,273.9 L772.7,278 L774.8,288.2 L770.7,294.3 Q768,300.4 764.5,300.4 L756.4,300.4 Q745,296 738,288.2 L720.6,275.9 Q716,270 716.5,265.7 Z" fill="#ffffff" stroke="#9c9c9c" stroke-width="2" stroke-linejoin="round" /><path d="M721,276 L738,288 Q745,295 756,299 L764,299 Q769,298 771,293 Q766,297 757,295 Q742,289 724,274 Z" fill="#d6d6d6" /><path d="M758,300 Q765,299 774,293 Q792,302 811,314 L797,313 L783,315 L776,311 L770,314 L762,310 L752,310 Z" fill="#6f4b32" /><path d="M774,293 Q792,302 811,314" fill="none" stroke="#3a2616" stroke-width="2" stroke-linejoin="round" /><path d="M809,316.5 Q820,318 833,329 Q829,337 821.5,343 Q812,336 809,327 Z" fill="#1c1c1c" /><path d="M825,322 Q834,328 833,331 Q829,338 821.5,343 Q828,334 828,328 Z" fill="#5a5a5a" /><path d="M664,331 L700,326 Q712,348 740,358 L732,378 L712,366 L686,364 L662,352 Z" fill="#ffffff" /><path d="M662,334 Q700,345 733,366" fill="none" stroke="#b0b0b0" stroke-width="1.6" stroke-linejoin="round" /><path d="M702,326 Q740,322 768,336 L792,366 L786,372 Q750,356 716,340 Z" fill="#fff4d8" /><path d="M708,327 L716,327 L722,338 L728,326 L738,327 L742,343 L748,330 L756,333 L757,350 L738,346 L718,338 Z" fill="#ec6e9a" /><path d="M757,336 L764,339 L766,356 L756,352 Z" fill="#ec6e9a" /><path d="M722,338 Q728,330 729,326 M742,343 Q746,334 748,330 M757,350 Q760,340 764,338 M766,356 Q772,346 776,344 M772,362 Q778,352 784,350" fill="none" stroke="#e0b060" stroke-width="0.8" stroke-linejoin="round" /><path d="M665,323 Q700,318 735,320 Q772,328 804,346 L821,343 Q818,349 812,353 Q772,336 735,325 Q700,324 668,331 Z" fill="#e2e2e2" stroke="#a9a9a9" stroke-width="1" stroke-linejoin="round" /><path d="M700,326 Q715,345 740,352 Q765,360 790,373 L789,378.5 Q762,366 738,357 Q713,350 697,329 Z" fill="#1c1c1c" /><path d="M730,378 L727,400 L745,395 L743,408 L761,385 L771,421 L776,398 L783,406 L788,380 Q760,368 740,362 Z" fill="#ffffff" stroke="#a4a4a4" stroke-width="2" stroke-linejoin="round" /><path d="M731,384 L729,396 L744,391 L742,402 L758,384 L748,372 Z" fill="#e6e6e6" /><path d="M658,378 L686,363 L715,363 L727,370 L723,382 Q700,395 665,413 L660,400 Z" fill="#ffffff" stroke="#a4a4a4" stroke-width="1.8" stroke-linejoin="round" /><path d="M662,404 Q690,390 722,380 L723,382 Q700,395 665,413 Z" fill="#dedede" /><path d="M718,365 Q733,365 738,375 L730,372 Q725,370 716,372 Z" fill="#111" /><path d="M705,377 Q716,377 720,383 L714,382 L704,382 Z" fill="#111" /><path d="M243,182 V189 M239.5,185.5 H246.5" stroke="#222" stroke-width="1"/></svg>
<svg class="s" width="1280" height="782"><path d="M18.3,11.6 L10.2,19.7 L11.9,19.7 L11.9,25 L16.8,25 L16.8,20.3 L19.9,20.3 L19.9,25 L24.2,25 L24.2,19.7 L26,19.7 Z" fill="#c6c6c6" /><path d="M1076.2,15.5 H1073.3 V24 H1085 V15.5 H1082.2" fill="none" stroke="#c6c6c6" stroke-width="2" stroke-linejoin="miter" /><path d="M1079.2,22 V12.5" fill="none" stroke="#c6c6c6" stroke-width="2" stroke-linejoin="miter" /><path d="M1075.3,14.8 L1079.2,10.6 L1083.1,14.8 Z" fill="#c6c6c6" /><rect x="1107.6" y="13.4" width="12.8" height="10.2" fill="none" stroke="#c6c6c6" stroke-width="1.5"/><rect x="1109.2" y="16" width="1.8" height="5" fill="#c6c6c6"/><circle cx="1156.8" cy="18" r="7" fill="#c6c6c6"/><path d="M1154.2,14.2 L1160.2,18 L1154.2,21.8 Z" fill="#323232" /><path d="M1184.7,0 V15.6 H1273.4 V0 M1209.3,0 V15.6 M1232.7,0 V15.6" fill="none" stroke="#444" stroke-width="1" stroke-linejoin="miter" /><rect x="1192.1" y="10" width="8.8" height="2.8" fill="#c6c6c6"/><rect x="1217.2" y="6.8" width="7.2" height="5.4" fill="none" stroke="#c6c6c6" stroke-width="1.8"/><path d="M1249.2,5.5 L1257,12 M1257,5.5 L1249.2,12" fill="none" stroke="#c6c6c6" stroke-width="2" stroke-linejoin="miter" /><path d="M12,41 L9.5,42.7 L12,44.4 M15,41 L12.5,42.7 L15,44.4" fill="none" stroke="#bbb" stroke-width="1" stroke-linejoin="miter" /><rect x="10.5" y="50" width="2" height="8" fill="#dfe6f0"/><path d="M33,52.5 H42 M33,55 H42 M33,57.5 H42" fill="none" stroke="#aaa" stroke-width="1.2" stroke-linejoin="miter" /><path d="M21,79 L21,92.5 L24.5,88.5 L31,88 Z" fill="none" stroke="#dcdcdc" stroke-width="1.3" stroke-linejoin="miter" /><path d="M36,96 L39,96 L39,93 Z" fill="#aaa" /><path d="M17,107.5 L17,120 L20.5,116.5 L24.5,116 Z" fill="#bdbdbd" /><rect x="22" y="109" width="11" height="10" fill="none" stroke="#c6c6c6" stroke-width="1" stroke-dasharray="2 1.3"/><path d="M36,125 L39,125 L39,122 Z" fill="#aaa" /><ellipse cx="25.5" cy="142" rx="7" ry="4.5" fill="none" stroke="#c6c6c6" stroke-width="1.2"/><path d="M20,144 Q18,148 21,149 Q23,150 21.5,152" fill="none" stroke="#c6c6c6" stroke-width="1.2" stroke-linejoin="miter" /><path d="M36,154 L39,154 L39,151 Z" fill="#aaa" /><path d="M19,186 Q19,181 24,180 L31,174 L32.5,175.5 L26.5,182 Q26,187 19,186 Z" fill="#5a5a5a" /><circle cx="29" cy="184" r="3.5" fill="#5a5a5a"/><path d="M18,216.5 Q18.5,211.5 22.5,211 L31,203.5 L32.5,205 L25.5,213.5 Q25,217 18,216.5 Z" fill="#c6c6c6" /><path d="M25.5,232 L32.5,239 L26,245.5 L19,238.5 Z" fill="#c6c6c6" /><path d="M21.5,241 L18.5,244 L22,247 L25,244" fill="none" stroke="#c6c6c6" stroke-width="1.2" stroke-linejoin="miter" /><rect x="18.5" y="263.6" width="12.8" height="10.8" fill="#6e6e6e" stroke="#c6c6c6" stroke-width="1.3"/><path d="M35,281 L37.5,281 L37.5,278.5 Z" fill="#aaa" /><path d="M19.5,304.5 L31.3,292.5" fill="none" stroke="#c6c6c6" stroke-width="1.5" stroke-linejoin="miter" /><path d="M18.5,341.5 L21,333 L29,328.5 L32.5,332 L28,340 Z" fill="#c6c6c6" /><path d="M18.5,341.5 L24,336" fill="none" stroke="#323232" stroke-width="1" stroke-linejoin="miter" /><path d="M36,347 L39,347 L39,344 Z" fill="#aaa" /><path d="M18.6,358.5 H31.6 V362 M18.6,358.5 V362 M25.1,358.5 V371 M22,371 H28.2" fill="none" stroke="#c6c6c6" stroke-width="1.6" stroke-linejoin="miter" /><path d="M19.5,392 L26,386.5 L32,392.5 L25.5,399 Z" fill="#c6c6c6" /><path d="M31,392 Q33,395 32,398" fill="none" stroke="#c6c6c6" stroke-width="1.3" stroke-linejoin="miter" /><path d="M36,405 L39,405 L39,402 Z" fill="#aaa" /><path d="M18.5,431 L18,429 L26,421 L28,423 L20,431 Z" fill="none" stroke="#c6c6c6" stroke-width="1.2" stroke-linejoin="miter" /><path d="M26.5,419.5 L29.5,416.5 Q32.5,416 32.5,419 L29.5,422 L31,423.5 L29.5,425 L24.5,420 L26,418.5 Z" fill="#c6c6c6" /><path d="M24,447 L29.8,452.8 L27.5,453.5 L25,457.5 L19.5,452 L23.5,449.5 Z" fill="#c6c6c6" /><path d="M21.5,454.5 L17.5,458.5" fill="none" stroke="#c6c6c6" stroke-width="1.4" stroke-linejoin="miter" /><path d="M20,489 L20,484 Q21,482.5 22,484 L22,488 L22,482 Q23,480.5 24,482 L24,487.5 L24,481.5 Q25.5,480 26.5,481.5 L26.5,488 L26.5,483 Q27.5,481.5 28.5,483 L28.5,491 Q29.5,489 31,488.5 Q32.5,489 31.5,491 Q29,496 27,498 L21.5,498 Q19.5,495 20,489 Z" fill="#c6c6c6" /><path d="M35,500 L37.5,500 L37.5,497.5 Z" fill="#aaa" /><circle cx="23.5" cy="517.5" r="4.8" fill="none" stroke="#c6c6c6" stroke-width="1.4"/><path d="M27,521 L32,526" fill="none" stroke="#c6c6c6" stroke-width="1.6" stroke-linejoin="miter" /><circle cx="20" cy="553.7" r="1.6" fill="#bbb"/><circle cx="25.2" cy="553.7" r="1.6" fill="#bbb"/><circle cx="30.4" cy="553.7" r="1.6" fill="#bbb"/><rect x="15" y="573" width="6.5" height="6.5" fill="#111" stroke="#ddd" stroke-width="1"/><rect x="11.8" y="569.8" width="6.5" height="6.5" fill="#fff" stroke="#ddd" stroke-width="1"/><path d="M30,573 Q34,572 35.5,575.5 L35.5,578.5 M33.8,577 L35.5,579 L37.2,577" fill="none" stroke="#555" stroke-width="1.3" stroke-linejoin="miter" /><rect x="20.8" y="595.2" width="16.6" height="17.6" fill="#fff"/><rect x="23.5" y="598" width="11.2" height="12" fill="#3a3a3a"/><path d="M21,612.5 L37.5,595.5" fill="none" stroke="#e02020" stroke-width="1.3" stroke-linejoin="miter" /><rect x="11.5" y="585.5" width="19" height="18" fill="#0b63d0" stroke="#e8f0ff" stroke-width="1"/><path d="M141,44.5 L146,49.5 M146,44.5 L141,49.5" fill="none" stroke="#aaa" stroke-width="1" stroke-linejoin="miter" /><circle cx="69.6" cy="66.5" r="3.3" fill="#c6c6c6"/><circle cx="65.6" cy="71.2" r="3.3" fill="#c6c6c6"/><circle cx="73.6" cy="71.2" r="3.3" fill="#c6c6c6"/><path d="M69.6,70 L67,77 H72.2 Z" fill="#c6c6c6" /><path d="M76,77 L78,77 L78,75 Z" fill="#aaa" /><path d="M107,70.6 H117 M110.5,67 L106.5,70.6 L110.5,74.2" fill="none" stroke="#c6c6c6" stroke-width="1.8" stroke-linejoin="miter" /><path d="M262,71 L270,64 L272,66.5 L266,71 Z" fill="none" stroke="#c6c6c6" stroke-width="1.2" stroke-linejoin="miter" /><rect x="266" y="69" width="8" height="7" fill="#c6c6c6"/><circle cx="265" cy="73.5" r="3.3" fill="#2a2a2a" stroke="#c6c6c6" stroke-width="1.2"/><path d="M841.25,63 V76.2 M835,69.6 H847.3" fill="none" stroke="#b0b0b0" stroke-width="1.3" stroke-linejoin="miter" /><rect x="837.6" y="66.2" width="7.2" height="6.9" fill="none" stroke="#b0b0b0" stroke-width="1.3"/><path d="M863.5,72 L863,69.5 Q863.2,68.5 864.2,69 L865.2,70.5 L865,66 Q865.5,65 866.3,66 L866.8,69.5 L867,65 Q867.8,64.2 868.5,65 L868.6,69.5 L869.5,66 Q870.3,65.3 870.9,66.2 L870.5,71 L871.5,69.8 Q872.5,69.5 872.6,70.5 L870.5,75 Q869,76.8 866.5,76.8 Q864.5,76.5 863.5,72 Z" fill="#c8c8c8" /><path d="M863.5,66 Q864.5,63.5 867.5,63.5" fill="none" stroke="#b8b8b8" stroke-width="1.1" stroke-linejoin="miter" /><path d="M870.2,65.2 L876.9,71.1 L872.5,76" fill="none" stroke="#b8b8b8" stroke-width="1.2" stroke-linejoin="miter" /><rect x="891.4" y="63.8" width="11.8" height="12.2" fill="none" stroke="#7a7a7a" stroke-width="1.6" stroke-dasharray="1.2 0.8"/><rect x="893.4" y="66.2" width="7.6" height="7.2" fill="#2e2e2e" stroke="#c8c8c8" stroke-width="1.4"/><path d="M918.5,67 L922.5,63 L926.5,67 M918.5,73.5 L922.5,77.5 L926.5,73.5" fill="none" stroke="#c6c6c6" stroke-width="1.4" stroke-linejoin="miter" /><path d="M989.5,68.5 L993.5,72.5 L997.5,68.5" fill="none" stroke="#e0e0e0" stroke-width="1.8" stroke-linejoin="miter" /><path d="M1265,41.5 L1267,43 L1265,44.5 M1268.5,41.5 L1270.5,43 L1268.5,44.5" fill="none" stroke="#ccc" stroke-width="1" stroke-linejoin="miter" /><path d="M1263,52.5 H1272 M1263,55.2 H1272 M1263,57.9 H1272" fill="none" stroke="#aaa" stroke-width="1.3" stroke-linejoin="miter" /><circle cx="1042" cy="133" r="4.8" fill="none" stroke="#c6c6c6" stroke-width="1.5"/><path d="M1045.5,136.5 L1050,141" fill="none" stroke="#c6c6c6" stroke-width="1.7" stroke-linejoin="miter" /><path d="M1245,129 H1256 M1245,134 H1256 M1245,139 H1256" fill="none" stroke="#c6c6c6" stroke-width="1.8" stroke-linejoin="miter" /><circle cx="1242.3" cy="129" r="1.3" fill="#c6c6c6"/><circle cx="1242.3" cy="134" r="1.3" fill="#c6c6c6"/><circle cx="1242.3" cy="139" r="1.3" fill="#c6c6c6"/><path d="M1026.8,178.5 L1030.6,182.3 L1034.4,178.5" fill="none" stroke="#bbb" stroke-width="1.5" stroke-linejoin="miter" /><path d="M1207.5,216 L1211.6,220.5 L1215.7,216" fill="none" stroke="#ddd" stroke-width="1.5" stroke-linejoin="miter" /><path d="M1207.5,251 L1211.6,255.5 L1215.7,251" fill="none" stroke="#ddd" stroke-width="1.5" stroke-linejoin="miter" /><path d="M1241.5,211.5 H1254.5 L1249.5,219 V226 L1246.5,226 V219 Z" fill="#cfcfcf" /><path d="M1253,561.5 V570 M1249.8,567 L1253,570.3 L1256.2,567" fill="none" stroke="#ddd" stroke-width="1.5" stroke-linejoin="miter" /><path d="M1026.5,608.8 L1030.5,613 L1026.5,617.2" fill="none" stroke="#aaa" stroke-width="1.5" stroke-linejoin="miter" /><path d="M1026.5,644.3 L1030.5,648.5 L1026.5,652.7" fill="none" stroke="#aaa" stroke-width="1.5" stroke-linejoin="miter" /><path d="M1034,767 Q1031,767 1031.5,764 Q1032,761 1035,761.5 Q1036,757 1040.5,757.5 Q1044.5,758 1045,761.5 Q1048.5,761.5 1048.5,764.5 Q1048.5,767 1045.5,767 Z" fill="#c6c6c6" /><path d="M1040,763 V772 M1037.5,769.5 L1040,772 L1042.5,769.5" fill="none" stroke="#c6c6c6" stroke-width="1.4" stroke-linejoin="miter" /><path d="M1040,763 V770" fill="none" stroke="#2e2e2e" stroke-width="3" stroke-linejoin="miter" /><path d="M1040,763 V772" fill="none" stroke="#c6c6c6" stroke-width="1.3" stroke-linejoin="miter" /><path d="M1241,758 H1255 M1245.5,758 V756.5 H1250.5 V758" fill="none" stroke="#c6c6c6" stroke-width="1.4" stroke-linejoin="miter" /><path d="M1242.5,760 L1243.5,771 H1252.5 L1253.5,760 Z" fill="#c6c6c6" /><path d="M1246,762 V769 M1248,762 V769 M1250,762 V769" fill="none" stroke="#2e2e2e" stroke-width="0.9" stroke-linejoin="miter" /><path d="M999,612 H1005 M999,614.3 H1005 M999,616.6 H1005" fill="none" stroke="#aaa" stroke-width="1.1" stroke-linejoin="miter" /><path d="M73,637 L79.5,640.3 L73,643.6 L66.5,640.3 Z" fill="#c6c6c6" /><path d="M66.5,643.6 L73,646.9 L79.5,643.6" fill="none" stroke="#c6c6c6" stroke-width="1.6" stroke-linejoin="miter" /><path d="M66.5,647.2 L73,650.5 L79.5,647.2" fill="none" stroke="#c6c6c6" stroke-width="1.6" stroke-linejoin="miter" /><rect x="157" y="640" width="9" height="8" fill="#4e4e4e"/><path d="M166,644 L170.5,640.5 V647.5 Z" fill="#4e4e4e" /><rect x="188.5" y="637.6" width="5.5" height="3.5" fill="#c6c6c6"/><rect x="184.5" y="646" width="5.5" height="3.5" fill="#c6c6c6"/><rect x="192.5" y="646" width="5.5" height="3.5" fill="#c6c6c6"/><path d="M191.2,641 V643.5 M187.2,646 V643.5 H195.2 V646" fill="none" stroke="#c6c6c6" stroke-width="1" stroke-linejoin="miter" /><path d="M197,650.5 L199,650.5 L199,648.5 Z" fill="#aaa" /><path d="M213,637.5 V649.5 H225.5" fill="none" stroke="#c6c6c6" stroke-width="1.2" stroke-linejoin="miter" /><path d="M215.5,647 L223.5,640.5 M220,640 H224 V644" fill="none" stroke="#c6c6c6" stroke-width="1.3" stroke-linejoin="miter" /><rect x="67" y="676.5" width="11" height="11" fill="none" stroke="#c6c6c6" stroke-width="1.2"/><path d="M72.5,679 V685 M69.5,682 H75.5" fill="none" stroke="#c6c6c6" stroke-width="1.2" stroke-linejoin="miter" /><path d="M94,677.5 H99.5 L101,679 H108 V687.5 H94 Z" fill="#c6c6c6" /><path d="M121.5,677.5 H134.5 M125,677.5 V676 H131 V677.5" fill="none" stroke="#c6c6c6" stroke-width="1.3" stroke-linejoin="miter" /><path d="M122.5,679 L123.5,689 H132.5 L133.5,679 Z" fill="#c6c6c6" /><path d="M126,681 V687 M128,681 V687 M130,681 V687" fill="none" stroke="#323232" stroke-width="0.9" stroke-linejoin="miter" /><circle cx="157.3" cy="682.5" r="1.7" fill="#c6c6c6"/><rect x="173.5" y="676" width="5.5" height="12.5" fill="none" stroke="#c6c6c6" stroke-width="1.4"/><path d="M192,682 Q199,675 206,682 Q199,689 192,682 Z" fill="none" stroke="#c6c6c6" stroke-width="1.3" stroke-linejoin="miter" /><circle cx="199" cy="682" r="2.2" fill="#c6c6c6"/><path d="M192.5,676 L205.5,689" fill="none" stroke="#c6c6c6" stroke-width="1.3" stroke-linejoin="miter" /><path d="M218,682 V679.5 Q218,676.5 221.5,676.5 Q225,676.5 225,679.5 V682" fill="none" stroke="#c6c6c6" stroke-width="1.6" stroke-linejoin="miter" /><rect x="215.8" y="682" width="11.5" height="7" fill="#c6c6c6"/><path d="M74,703.5 H83 V712.5 H77 L74,709.5 Z" fill="none" stroke="#b8c8dc" stroke-width="1.1" stroke-linejoin="miter" /><rect x="471" y="638.8" width="10.4" height="10.1" fill="#c6c6c6"/><circle cx="476.2" cy="644.7" r="1.9" fill="#333"/><rect x="500" y="638.8" width="11" height="10.1" fill="#c6c6c6"/><circle cx="505.5" cy="644.7" r="2.4" fill="none" stroke="#333" stroke-width="1.4"/><rect x="529.9" y="638.8" width="10.5" height="10.1" fill="#c6c6c6"/><rect x="536.8" y="641.8" width="1.7" height="5.7" fill="#333"/><rect x="551.5" y="630.5" width="27" height="27" rx="2" fill="#363636" stroke="#555" stroke-width="1"/><rect x="559.6" y="638.8" width="10.1" height="10.1" fill="#c6c6c6"/><circle cx="564.8" cy="644.7" r="1.9" fill="#333"/><path d="M566.8,642.8 L569.7,636.3 L572.5,642.8 M567.8,640.8 H571.6" fill="none" stroke="#c6c6c6" stroke-width="1.1" stroke-linejoin="miter" /><path d="M571,651.7 L573,651.7 L573,649.7 Z" fill="#aaa" /><rect x="589.1" y="638.8" width="10.6" height="10.1" fill="#c6c6c6"/><circle cx="598.3" cy="647.5" r="5.8" fill="#c6c6c6" stroke="#323232" stroke-width="1.4"/><rect x="595" y="646.7" width="6.6" height="1.8" fill="#333"/><rect x="610.3" y="630.5" width="1" height="27" fill="#4a4a4a"/><circle cx="624" cy="644" r="5" fill="#7e7e7e"/><circle cx="630.2" cy="644" r="5.4" fill="#c6c6c6"/><path d="M634.5,651 L636.5,651 L636.5,649 Z" fill="#aaa" /><rect x="656" y="639" width="7" height="6.5" fill="#545454"/><rect x="650.6" y="644.5" width="7" height="6" fill="#545454"/><path d="M681,644 L685,640 M681,644 L685,648 M693.5,644 L689.5,640 M693.5,644 L689.5,648" fill="none" stroke="#545454" stroke-width="2" stroke-linejoin="miter" /><rect x="715.5" y="639" width="7" height="6.5" fill="#545454"/><circle cx="713.5" cy="647" r="3.5" fill="#545454"/><rect x="732" y="630.5" width="1" height="27" fill="#4a4a4a"/><path d="M747,641 H743 V647.3 H755.5 V643" fill="none" stroke="#c6c6c6" stroke-width="1.7" stroke-linejoin="miter" /><path d="M747,643 Q748,640 752,640 M750.5,637.8 L754.5,640.5 L750.5,643.2 Z" fill="#c6c6c6" /><path d="M773.2,638.8 L784.4,643.5 L773.2,648.2 Z" fill="#c6c6c6" /><path d="M866.5,643.5 Q867,639.5 872,639.2 Q877.5,639.5 878,644.5 M864.5,648.2 H878.7" fill="none" stroke="#c6c6c6" stroke-width="1.6" stroke-linejoin="miter" /><path d="M864,640.5 L869.5,640 L866.5,645 Z" fill="#c6c6c6" /><rect x="888.8" y="643" width="20" height="2.3" fill="#c6c6c6"/><circle cx="916.9" cy="643.8" r="4.6" fill="none" stroke="#c6c6c6" stroke-width="1.7"/><rect x="925" y="643" width="42" height="1.6" fill="#484848"/><path d="M976.3,648.1 L981,641.5 L983,643.5 L980.5,648.1 Z M980.5,648.1 L986.7,640 L993.1,648.1 Z" fill="#c6c6c6" /><rect x="244.00" y="700.2" width="20.38" height="15.6" fill="#9565c6"/><rect x="264.98" y="700.2" width="19.68" height="15.6" fill="#b4b4b4"/><rect x="285.87" y="700.2" width="19.68" height="15.6" fill="#b4b4b4"/><rect x="306.75" y="700.2" width="19.68" height="15.6" fill="#b4b4b4"/><rect x="327.64" y="700.2" width="19.68" height="15.6" fill="#b4b4b4"/><rect x="348.52" y="700.2" width="19.68" height="15.6" fill="#b4b4b4"/><rect x="369.40" y="700.2" width="19.68" height="15.6" fill="#b4b4b4"/><rect x="390.29" y="700.2" width="19.68" height="15.6" fill="#b4b4b4"/><circle cx="249.02" cy="710" r="2.7" fill="#1e1e1e"/><circle cx="269.91" cy="710" r="2.7" fill="#1e1e1e"/><rect x="281.45" y="707.2" width="1.4" height="5.6" fill="#1e1e1e"/><circle cx="290.79" cy="710" r="2.7" fill="#1e1e1e"/><rect x="302.33" y="707.2" width="1.4" height="5.6" fill="#1e1e1e"/><circle cx="311.67" cy="710" r="2.7" fill="#1e1e1e"/><rect x="323.21" y="707.2" width="1.4" height="5.6" fill="#1e1e1e"/><circle cx="332.56" cy="710" r="2.7" fill="#1e1e1e"/><rect x="344.10" y="707.2" width="1.4" height="5.6" fill="#1e1e1e"/><circle cx="353.44" cy="710" r="2.7" fill="#1e1e1e"/><rect x="364.98" y="707.2" width="1.4" height="5.6" fill="#1e1e1e"/><circle cx="374.32" cy="710" r="2.7" fill="#1e1e1e"/><rect x="385.87" y="707.2" width="1.4" height="5.6" fill="#1e1e1e"/><circle cx="395.21" cy="710" r="2.7" fill="#1e1e1e"/><rect x="406.75" y="707.2" width="1.4" height="5.6" fill="#1e1e1e"/><path d="M256.94,706.8 L262.44,710 L256.94,713.2 Z" fill="#1e1e1e"/><path d="M380,665.5 H389.5 V695 L384.75,699 L380,695 Z" fill="#3d86d6" /><rect x="384" y="699" width="1.5" height="63" fill="#3d86d6"/></svg>
</body></html>
